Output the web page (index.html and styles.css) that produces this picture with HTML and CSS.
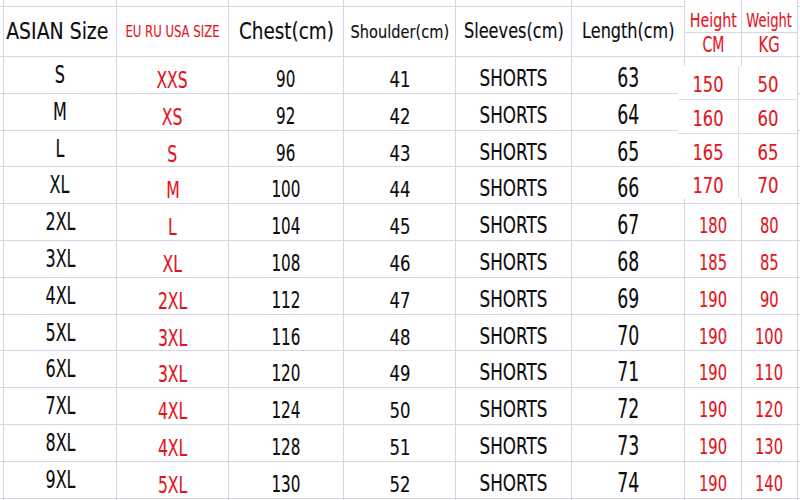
FILE: index.html
```html
<!DOCTYPE html>
<html>
<head>
<meta charset="utf-8">
<link rel="stylesheet" href="styles.css">
</head>
<body>
<div class="sheet">
  <div class="grid">
    <!-- top strip -->
    <div class="c gut"></div>
    <div class="c top"></div><div class="c top"></div><div class="c top"></div><div class="c top"></div><div class="c top"></div><div class="c top"></div>
    <div class="c hh span2"><span class="t th-h">Height</span></div>
    <div class="c hh span2"><span class="t th-w">Weight</span></div>
    <div class="c rg"></div>
    <!-- header -->
    <div class="c gut span2"></div>
    <div class="c h span2 p-asian"><span class="t th-asian">ASIAN Size</span></div>
    <div class="c h span2 p-eu"><span class="t th-eu red">EU RU USA SIZE</span></div>
    <div class="c h span2 p-chest"><span class="t th-chest">Chest(cm)</span></div>
    <div class="c h span2 p-shoulder"><span class="t th-shoulder">Shoulder(cm)</span></div>
    <div class="c h span2 p-sleeves"><span class="t th-sleeves">Sleeves(cm)</span></div>
    <div class="c h span2 p-length"><span class="t th-length">Length(cm)</span></div>
    <div class="c rg span2"></div>
    <div class="c hu"><span class="t th-cm">CM</span></div>
    <div class="c hu"><span class="t th-kg">KG</span></div>

    <!-- row 1 -->
    <div class="c gut"></div>
    <div class="c d1"><span class="t">S</span></div><div class="c d2"><span class="t">XXS</span></div><div class="c d3"><span class="t">90</span></div><div class="c d4"><span class="t">41</span></div><div class="c d5"><span class="t">SHORTS</span></div><div class="c d6"><span class="t">63</span></div><div class="c"></div><div class="c"></div>
    <div class="c rg"></div>
    <!-- row 2 -->
    <div class="c gut"></div>
    <div class="c d1"><span class="t">M</span></div><div class="c d2"><span class="t">XS</span></div><div class="c d3"><span class="t">92</span></div><div class="c d4"><span class="t">42</span></div><div class="c d5"><span class="t">SHORTS</span></div><div class="c d6"><span class="t">64</span></div><div class="c"></div><div class="c"></div>
    <div class="c rg"></div>
    <!-- row 3 -->
    <div class="c gut"></div>
    <div class="c d1"><span class="t">L</span></div><div class="c d2"><span class="t">S</span></div><div class="c d3"><span class="t">96</span></div><div class="c d4"><span class="t">43</span></div><div class="c d5"><span class="t">SHORTS</span></div><div class="c d6"><span class="t">65</span></div><div class="c"></div><div class="c"></div>
    <div class="c rg"></div>
    <!-- row 4 -->
    <div class="c gut"></div>
    <div class="c d1"><span class="t">XL</span></div><div class="c d2"><span class="t">M</span></div><div class="c d3"><span class="t">100</span></div><div class="c d4"><span class="t">44</span></div><div class="c d5"><span class="t">SHORTS</span></div><div class="c d6"><span class="t">66</span></div><div class="c"></div><div class="c"></div>
    <div class="c rg"></div>
    <!-- row 5 -->
    <div class="c gut"></div>
    <div class="c d1"><span class="t">2XL</span></div><div class="c d2"><span class="t">L</span></div><div class="c d3"><span class="t">104</span></div><div class="c d4"><span class="t">45</span></div><div class="c d5"><span class="t">SHORTS</span></div><div class="c d6"><span class="t">67</span></div><div class="c d7"><span class="t">180</span></div><div class="c d7"><span class="t">80</span></div>
    <div class="c rg"></div>
    <!-- row 6 -->
    <div class="c gut"></div>
    <div class="c d1"><span class="t">3XL</span></div><div class="c d2"><span class="t">XL</span></div><div class="c d3"><span class="t">108</span></div><div class="c d4"><span class="t">46</span></div><div class="c d5"><span class="t">SHORTS</span></div><div class="c d6"><span class="t">68</span></div><div class="c d7"><span class="t">185</span></div><div class="c d7"><span class="t">85</span></div>
    <div class="c rg"></div>
    <!-- row 7 -->
    <div class="c gut"></div>
    <div class="c d1"><span class="t">4XL</span></div><div class="c d2"><span class="t">2XL</span></div><div class="c d3"><span class="t">112</span></div><div class="c d4"><span class="t">47</span></div><div class="c d5"><span class="t">SHORTS</span></div><div class="c d6"><span class="t">69</span></div><div class="c d7"><span class="t">190</span></div><div class="c d7"><span class="t">90</span></div>
    <div class="c rg"></div>
    <!-- row 8 -->
    <div class="c gut"></div>
    <div class="c d1"><span class="t">5XL</span></div><div class="c d2"><span class="t">3XL</span></div><div class="c d3"><span class="t">116</span></div><div class="c d4"><span class="t">48</span></div><div class="c d5"><span class="t">SHORTS</span></div><div class="c d6"><span class="t">70</span></div><div class="c d7"><span class="t">190</span></div><div class="c d7"><span class="t">100</span></div>
    <div class="c rg"></div>
    <!-- row 9 -->
    <div class="c gut"></div>
    <div class="c d1"><span class="t">6XL</span></div><div class="c d2"><span class="t">3XL</span></div><div class="c d3"><span class="t">120</span></div><div class="c d4"><span class="t">49</span></div><div class="c d5"><span class="t">SHORTS</span></div><div class="c d6"><span class="t">71</span></div><div class="c d7"><span class="t">190</span></div><div class="c d7"><span class="t">110</span></div>
    <div class="c rg"></div>
    <!-- row 10 -->
    <div class="c gut"></div>
    <div class="c d1"><span class="t">7XL</span></div><div class="c d2"><span class="t">4XL</span></div><div class="c d3"><span class="t">124</span></div><div class="c d4"><span class="t">50</span></div><div class="c d5"><span class="t">SHORTS</span></div><div class="c d6"><span class="t">72</span></div><div class="c d7"><span class="t">190</span></div><div class="c d7"><span class="t">120</span></div>
    <div class="c rg"></div>
    <!-- row 11 -->
    <div class="c gut"></div>
    <div class="c d1"><span class="t">8XL</span></div><div class="c d2"><span class="t">4XL</span></div><div class="c d3"><span class="t">128</span></div><div class="c d4"><span class="t">51</span></div><div class="c d5"><span class="t">SHORTS</span></div><div class="c d6"><span class="t">73</span></div><div class="c d7"><span class="t">190</span></div><div class="c d7"><span class="t">130</span></div>
    <div class="c rg"></div>
    <!-- row 12 -->
    <div class="c gut"></div>
    <div class="c d1"><span class="t">9XL</span></div><div class="c d2"><span class="t">5XL</span></div><div class="c d3"><span class="t">130</span></div><div class="c d4"><span class="t">52</span></div><div class="c d5"><span class="t">SHORTS</span></div><div class="c d6"><span class="t">74</span></div><div class="c d7"><span class="t">190</span></div><div class="c d7"><span class="t">140</span></div>
    <div class="c rg"></div>
    <!-- bottom strip -->
    <div class="c gut bot"></div>
    <div class="c bot"></div><div class="c bot"></div><div class="c bot"></div><div class="c bot"></div><div class="c bot"></div><div class="c bot"></div><div class="c bot"></div><div class="c bot"></div>
    <div class="c rg bot"></div>
  </div>

  <div class="paste">
    <div class="pc"><span class="t pt-h">150</span></div><div class="pc"><span class="t pt-w">50</span></div>
    <div class="pc"><span class="t pt-h">160</span></div><div class="pc"><span class="t pt-w">60</span></div>
    <div class="pc"><span class="t pt-h">165</span></div><div class="pc"><span class="t pt-w">65</span></div>
    <div class="pc"><span class="t pt-h">170</span></div><div class="pc"><span class="t pt-w">70</span></div>
  </div>
</div>
</body>
</html>
```

FILE: styles.css
```css
html, body {
  margin: 0;
  padding: 0;
  background: #ffffff;
}
body {
  width: 800px;
  height: 500px;
  overflow: hidden;
  font-family: "DejaVu Sans", Verdana, sans-serif;
  color: #0d0d0d;
}
.sheet {
  position: relative;
  width: 800px;
  height: 500px;
}
.grid {
  display: grid;
  grid-template-columns: 4px 113px 112px 115px 112px 116px 113px 57px 56px 2px;
  grid-template-rows: 7px 26px 24px 37px 37px 36px 37px 37px 37px 37px 36px 37px 37px 37px 37px 1px;
}
.c {
  box-sizing: border-box;
  border-right: 1px solid #d5d5e6;
  border-bottom: 1px solid #d5d5e6;
  display: flex;
  justify-content: center;
  align-items: flex-start;
  line-height: 1;
  white-space: nowrap;
  min-width: 0;
}
.span2 { grid-row: span 2; }
.rg { border-right: none; }
.bot { border-bottom: none; }
.t {
  display: inline-block;
  white-space: nowrap;
  transform-origin: 50% 50%;
  -webkit-text-stroke: 0.15px currentColor;
}
.red, .hh, .hu, .d2, .d7, .paste { color: #e3141c; }

/* header */
.p-asian { padding-top: 13px; padding-right: 5px; }
.th-asian { font-size: 23px; transform: scaleX(0.82); }
.p-eu { padding-top: 17px; }
.th-eu { font-size: 16px; transform: scaleX(0.73); -webkit-text-stroke: 0.1px currentColor; }
.p-chest { padding-top: 13px; }
.th-chest { font-size: 23px; transform: scaleX(0.80); }
.p-shoulder { padding-top: 16px; }
.th-shoulder { font-size: 18px; transform: scaleX(0.81); }
.p-sleeves { padding-top: 14px; }
.th-sleeves { font-size: 21px; transform: scaleX(0.77); }
.p-length { padding-top: 13px; }
.th-length { font-size: 22px; transform: scaleX(0.73); }
.hh { padding-top: 11px; }
.th-h { font-size: 19px; transform: scaleX(0.75); }
.th-w { font-size: 19px; transform: scaleX(0.69); }
.hu { padding-top: 2px; }
.th-cm { font-size: 21px; transform: scaleX(0.67); }
.th-kg { font-size: 21px; transform: scaleX(0.70); }

/* data */
.d1 { padding-top: 5px; }
.d1 .t { font-size: 25px; transform: scaleX(0.64); }
.d2 { padding-top: 12px; }
.d2 .t { font-size: 23px; transform: scaleX(0.68); }
.d3 { padding-top: 11px; }
.d3 .t { font-size: 23px; transform: scaleX(0.66); }
.d4 { padding-top: 12px; }
.d4 .t { font-size: 22px; transform: scaleX(0.75); }
.d5 { padding-top: 10px; }
.d5 .t { font-size: 23px; transform: scaleX(0.73); }
.d6 { padding-top: 7px; }
.d6 .t { font-size: 27px; transform: scaleX(0.64); }
.d7 { padding-top: 12px; }
.d7 .t { font-size: 21px; transform: scaleX(0.70); }

/* pasted block over height / weight, rows 1-4 */
.paste {
  position: absolute;
  left: 678px;
  top: 66px;
  width: 119px;
  height: 132px;
  background: #ffffff;
  display: grid;
  grid-template-columns: 61px 58px;
  grid-template-rows: 34px 34px 33px 31px;
}
.pc {
  box-sizing: border-box;
  display: flex;
  justify-content: center;
  align-items: flex-start;
  padding-top: 8px;
  line-height: 1;
  border-bottom: 1px solid #dfdfeb;
}
.pc:nth-child(odd) { border-right: 1px solid #dfdfeb; }
.pc:nth-last-child(-n+2) { border-bottom: none; }
.pt-h { font-size: 22px; transform: scaleX(0.74); }
.pt-w { font-size: 22px; transform: scaleX(0.75); }
```
